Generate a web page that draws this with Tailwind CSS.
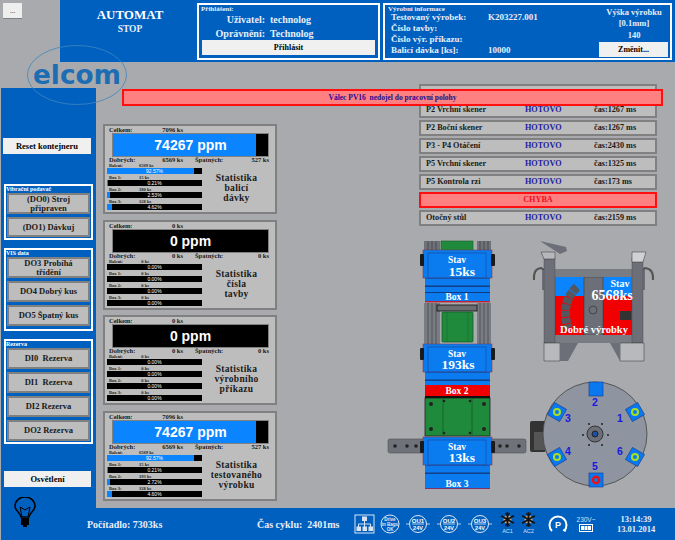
<!DOCTYPE html>
<html lang="cs">
<head>
<meta charset="UTF-8">
<title>Elcom - Automat</title>
<script src="https://cdn.jsdelivr.net/npm/@tailwindcss/browser@4"></script>
</head>
<body class="bg-[#a9aaae]">
<div class="relative w-[675px] h-[540px] overflow-hidden bg-[#a9aaae] font-['Liberation_Serif',serif] font-bold text-[#1a1a1a]">

  <!-- top -->
  <div class="flex h-[62px]">
    <div class="w-[60px] pl-[3px] pt-[3px]">
      <button class="block w-[19px] h-[16px] bg-[#eeeeee] border-b border-[#808080] text-[7px] leading-[16px] text-[#555]">...</button>
    </div>
    <div class="flex-1 flex bg-[#0060c0] pt-[3px] text-white">
      <div class="w-[137px] pl-[3px] text-center">
        <div class="text-[13px] leading-[15px] mt-[4px]">AUTOMAT</div>
        <div class="text-[9.5px] leading-[13px] mt-[1px] text-[#e8eef8]">STOP</div>
      </div>
      <div class="w-[183px] h-[57px] border-2 border-white px-[3px] text-[#e8eef8]">
        <div class="text-[7px] leading-[6px] mt-px -ml-px">Přihlášení:</div>
        <div class="flex h-[14px] items-center text-[10px]"><span class="w-[63px] text-right">Uživatel:</span><span class="ml-[5px]">technolog</span></div>
        <div class="flex h-[14px] items-center text-[10px]"><span class="w-[63px] text-right">Oprávnění:</span><span class="ml-[5px]">Technolog</span></div>
        <button class="block w-full h-[15px] bg-[#f0f0f0] text-black text-[8px] leading-[15px]">Přihlásit</button>
      </div>
      <div class="w-[289px] h-[57px] ml-[3px] border-2 border-white flex text-[#e8eef8]">
        <div class="w-[210px] pl-[3px]">
          <div class="text-[7px] leading-[6px] mt-px">Výrobní informace</div>
          <div class="flex h-[11px] items-center text-[9px] pl-[3px] mt-[0.5px]"><span class="w-[97px]">Testovaný výrobek:</span><span>K203227.001</span></div>
          <div class="flex h-[11px] items-center text-[9px] pl-[3px]"><span class="w-[97px]">Číslo tavby:</span></div>
          <div class="flex h-[11px] items-center text-[9px] pl-[3px]"><span class="w-[97px]">Číslo výr. příkazu:</span></div>
          <div class="flex h-[11px] items-center text-[9px] pl-[3px]"><span class="w-[97px]">Balicí dávka [ks]:</span><span>10000</span></div>
        </div>
        <div class="flex-1 pl-[3px] text-center text-[8.5px] leading-[11px]">
          <div class="mt-[1.5px]">Výška výrobku</div>
          <div>[0.1mm]</div>
          <div class="h-[13px] leading-[12px]">140</div>
          <button class="block ml-px w-[69px] h-[15px] bg-[#f0f0f0] text-black text-[8px] leading-[15px]">Změnit...</button>
        </div>
      </div>
      <div class="flex-1"></div>
    </div>
  </div>

  <!-- middle -->
  <div class="flex h-[446px]">
    <div class="w-[96px] mt-[26px] bg-[#0060c0] border-l border-[#a9aaae] pl-[2px] pr-[5px]">
      <button class="block mt-[50px] w-[88px] h-[16px] bg-[#f0f0f0] text-[8.5px] leading-[16px] text-black">Reset kontejneru</button>
      <div class="mt-[30px] h-[56px] ml-px w-[89px] border-2 border-white px-px">
        <div class="text-[6px] leading-[7px] text-white -ml-px">Vibrační podavač</div>
        <div class="flex flex-col gap-[3px]">
          <button class="h-[21px] bg-[#bdbdbd] border-2 border-[#808080] text-[8.5px] leading-[9px]">(DO0) Stroj<br>připraven</button>
          <button class="h-[20px] bg-[#bdbdbd] border-2 border-[#808080] text-[8.5px] leading-[9px]">(DO1) Dávkuj</button>
        </div>
      </div>
      <div class="mt-[8px] h-[83px] ml-px w-[89px] border-2 border-white px-px">
        <div class="text-[6px] leading-[7px] text-white -ml-px">VIS data</div>
        <div class="flex flex-col gap-[3px]">
          <button class="h-[21px] bg-[#bdbdbd] border-2 border-[#808080] text-[8.5px] leading-[9px]">DO3 Probíhá<br>třídění</button>
          <button class="h-[21px] bg-[#bdbdbd] border-2 border-[#808080] text-[8.5px] leading-[9px]">DO4 Dobrý kus</button>
          <button class="h-[21px] bg-[#bdbdbd] border-2 border-[#808080] text-[8.5px] leading-[9px]">DO5 Špatný kus</button>
        </div>
      </div>
      <div class="mt-[8px] h-[105px] ml-px w-[89px] border-2 border-white px-px">
        <div class="text-[6px] leading-[7px] text-white -ml-px">Rezerva</div>
        <div class="flex flex-col gap-[3px]">
          <button class="h-[21px] bg-[#bdbdbd] border-2 border-[#808080] text-[8.5px] leading-[9px]">DI0&nbsp; Rezerva</button>
          <button class="h-[21px] bg-[#bdbdbd] border-2 border-[#808080] text-[8.5px] leading-[9px]">DI1&nbsp; Rezerva</button>
          <button class="h-[21px] bg-[#bdbdbd] border-2 border-[#808080] text-[8.5px] leading-[9px]">DI2 Rezerva</button>
          <button class="h-[21px] bg-[#bdbdbd] border-2 border-[#808080] text-[8.5px] leading-[9px]">DO2 Rezerva</button>
        </div>
      </div>
      <button class="block mt-[27px] ml-px w-[87px] h-[16px] bg-[#f0f0f0] text-[8.5px] leading-[16px] text-black">Osvětlení</button>
    </div>

    <!-- statistics cards -->
    <div id="cards" class="w-[174px] ml-[7px] pt-[62px] flex flex-col gap-[5.5px]"></div>

    <!-- step table -->
    <div class="w-[295px] ml-[103px]">
      <div class="ml-[39px] mt-[22px] w-[238px] flex flex-col gap-[2px] text-[8.2px]">
        <div class="h-[16px] bg-[#bdbdbd] border-2 border-[#808080]"></div>
        <div class="h-[16px] bg-[#bdbdbd] border-2 border-[#808080] grid grid-cols-[99px_69px_1fr] items-center pl-[5px]"><span>P2 Vrchní skener</span><span class="text-[#1c1c9c]">HOTOVO</span><span>čas:1267 ms</span></div>
        <div class="h-[16px] bg-[#bdbdbd] border-2 border-[#808080] grid grid-cols-[99px_69px_1fr] items-center pl-[5px]"><span>P2 Boční skener</span><span class="text-[#1c1c9c]">HOTOVO</span><span>čas:1267 ms</span></div>
        <div class="h-[16px] bg-[#bdbdbd] border-2 border-[#808080] grid grid-cols-[99px_69px_1fr] items-center pl-[5px]"><span>P3 - P4 Otáčení</span><span class="text-[#1c1c9c]">HOTOVO</span><span>čas:2430 ms</span></div>
        <div class="h-[16px] bg-[#bdbdbd] border-2 border-[#808080] grid grid-cols-[99px_69px_1fr] items-center pl-[5px]"><span>P5 Vrchní skener</span><span class="text-[#1c1c9c]">HOTOVO</span><span>čas:1325 ms</span></div>
        <div class="h-[16px] bg-[#bdbdbd] border-2 border-[#808080] grid grid-cols-[99px_69px_1fr] items-center pl-[5px]"><span>P5 Kontrola rzi</span><span class="text-[#1c1c9c]">HOTOVO</span><span>čas:173 ms</span></div>
        <div class="h-[16px] bg-[#ff8080] border-2 border-[#ff1010] text-center leading-[12px] text-[#f01020]">CHYBA</div>
        <div class="h-[16px] bg-[#bdbdbd] border-2 border-[#808080] grid grid-cols-[99px_69px_1fr] items-center pl-[5px]"><span>Otočný stůl</span><span class="text-[#1c1c9c]">HOTOVO</span><span>čas:2159 ms</span></div>
      </div>
    </div>
  </div>

  <!-- logo over the corner -->
  <svg class="absolute left-[20px] top-[40px] overflow-visible" width="115" height="70" viewBox="0 0 115 70">
    <ellipse cx="57" cy="35" rx="49.5" ry="29.5" fill="none" stroke="#3f86bd" stroke-width="0.8"/>
    <text x="13" y="44" font-family="'DejaVu Sans',sans-serif" font-weight="700" font-size="26" textLength="88" lengthAdjust="spacingAndGlyphs" fill="#1c6db3">elcom</text>
  </svg>

  <!-- alert over the step table -->
  <div class="absolute z-10 left-[122px] top-[89px] w-[541px] h-[17px] bg-[#ff8080] border-2 border-[#ff1010] text-center text-[7.5px] leading-[13px] text-[#2a0a90]">Válec PV16&nbsp; nedojel do pracovní polohy</div>

  <!-- machine drawings, free canvas -->
  <svg class="absolute left-[380px] top-[235px]" width="150" height="260" viewBox="0 0 150 260" font-family="'Liberation Serif',serif" font-weight="700" text-anchor="middle">
    <defs>
      <g id="box">
        <rect x="45" y="0" width="65" height="52" fill="#0a7cf0"/>
        <rect x="43" y="0" width="69" height="28" fill="#0a7cf0" stroke="#7a3050" stroke-width="0.5"/>
        <rect x="48" y="3" width="58" height="25" fill="none" stroke="#1850a8" stroke-width="0.8"/>
        <rect x="45" y="28" width="65" height="0.8" fill="#1850a8"/>
        <rect x="45" y="35.5" width="65" height="1.4" fill="#123a80"/>
        <rect x="45" y="42" width="65" height="1.2" fill="#123a80"/>
        <rect x="40" y="4" width="4" height="12" rx="1" fill="#1a1a1a"/>
        <rect x="111" y="4" width="4" height="12" rx="1" fill="#1a1a1a"/>
        <text x="77" y="13" font-size="9.5" fill="#fff">Stav</text>
      </g>
    </defs>
    <!-- rails -->
    <rect x="44" y="6" width="16" height="10" fill="#6f7278"/>
    <rect x="97" y="6" width="14" height="10" fill="#6f7278"/>
    <path d="M48 6v10M52 6v10M56 6v10M100 6v10M104 6v10M108 6v10" stroke="#3a3c40" stroke-width="0.7"/>
    <rect x="61" y="6" width="32" height="10" fill="#1f8a3c" stroke="#146028" stroke-width="0.6"/>
    <rect x="44" y="68" width="16" height="41" fill="#797c82"/>
    <rect x="97" y="68" width="14" height="41" fill="#797c82"/>
    <path d="M48 68v41M52 68v41M56 68v41M100 68v41M104 68v41M108 68v41" stroke="#44474c" stroke-width="0.7"/>
    <rect x="57" y="70" width="40" height="6" fill="#6a6c70" stroke="#111" stroke-width="0.8"/>
    <rect x="62" y="77" width="31" height="30" rx="1" fill="#1f8a3c" stroke="#146028" stroke-width="0.8"/>
    <path d="M67 77v30M88 77v30" stroke="#146028" stroke-width="0.5"/>
    <!-- arms -->
    <rect x="8" y="204" width="36" height="14" rx="2" fill="#6f7278" stroke="#505258" stroke-width="0.6"/>
    <rect x="111" y="204" width="35" height="14" rx="2" fill="#6f7278" stroke="#505258" stroke-width="0.6"/>
    <g fill="#222"><circle cx="15" cy="211" r="1.8"/><circle cx="27" cy="211" r="1.8"/><circle cx="36" cy="211" r="1.8"/><circle cx="120" cy="211" r="1.8"/><circle cx="127" cy="211" r="1.8"/><circle cx="139" cy="211" r="1.8"/></g>
    <!-- green plate -->
    <rect x="45" y="163" width="65" height="38" fill="#1f8a3c" stroke="#222" stroke-width="0.8"/>
    <path d="M63 163v38M92 163v38" stroke="#146028" stroke-width="0.9"/>
    <g fill="#222"><circle cx="51" cy="169" r="2"/><circle cx="51" cy="194" r="2"/><circle cx="104" cy="169" r="2"/><circle cx="104" cy="194" r="2"/><circle cx="64" cy="166" r="1.3"/><circle cx="90" cy="166" r="1.3"/><circle cx="64" cy="198" r="1.3"/><circle cx="90" cy="198" r="1.3"/></g>
    <!-- box 1 -->
    <use href="#box" y="15"/>
    <rect x="45" y="58" width="65" height="9" fill="#0a7cf0"/>
    <rect x="45" y="66" width="65" height="1.4" fill="#c02030"/>
    <text x="82" y="41" font-size="13.5" fill="#fff">15ks</text>
    <text x="77" y="65" font-size="9.5" fill="#fff">Box 1</text>
    <!-- box 2 -->
    <use href="#box" y="109"/>
    <rect x="45" y="150" width="65" height="11" fill="#f00000"/>
    <rect x="45" y="161" width="65" height="2" fill="#111"/>
    <text x="78" y="134" font-size="13.5" fill="#fff">193ks</text>
    <text x="77" y="159" font-size="9.5" fill="#fff">Box 2</text>
    <!-- box 3 -->
    <use href="#box" y="202"/>
    <rect x="45" y="244" width="65" height="9" fill="#0a7cf0"/>
    <rect x="45" y="253" width="65" height="0.8" fill="#a02040"/>
    <text x="82" y="227" font-size="13.5" fill="#fff">13ks</text>
    <text x="77" y="252" font-size="9.5" fill="#fff">Box 3</text>
  </svg>

  <svg class="absolute left-[530px] top-[235px]" width="145" height="135" viewBox="10 0 145 135" font-family="'Liberation Serif',serif" font-weight="700" text-anchor="middle">
    <path d="M20 6L46 12L47 16L40 19Z" fill="#6d6f78"/>
    <path d="M14 45Q13 34 21 33Q24 34 25 37M133 45Q134 34 125 33Q123 34 122 37" fill="none" stroke="#555" stroke-width="2"/>
    <rect x="22" y="35" width="3" height="20" fill="#6d6f78"/>
    <rect x="122" y="35" width="3" height="20" fill="#6d6f78"/>
    <rect x="35" y="42" width="77" height="19" fill="#0a84ff"/>
    <rect x="35" y="61" width="77" height="39" fill="#f00000"/>
    <rect x="64" y="42" width="19" height="58" fill="#6d6f78" stroke="#333" stroke-width="0.5"/>
    <circle cx="73" cy="75" r="4" fill="none" stroke="#333" stroke-width="0.7"/>
    <path d="M57 52Q40 68 48 93" fill="none" stroke="#55575e" stroke-width="9" stroke-dasharray="6 0.8"/>
    <rect x="100" y="76" width="11" height="9" fill="#333"/>
    <rect x="35" y="34" width="77" height="8" fill="#7a7c84"/>
    <rect x="35" y="100" width="77" height="8" fill="#7a7c84"/>
    <rect x="24" y="23" width="11" height="85" fill="#6d6f78" stroke="#444" stroke-width="0.4"/>
    <rect x="112" y="23" width="11" height="85" fill="#6d6f78" stroke="#444" stroke-width="0.4"/>
    <path d="M21 17H35V24H24Z" fill="#b5b7bb" stroke="#333" stroke-width="0.5"/>
    <path d="M112 17H126L123 27H112Z" fill="#d0d1d4" stroke="#333" stroke-width="0.5"/>
    <path d="M24 108H40V126H24Z" fill="#b8b9bc" stroke="#333" stroke-width="0.5"/>
    <path d="M100 108H124V126H100Z" fill="#b8b9bc" stroke="#333" stroke-width="0.5"/>
    <path d="M40 108H58L48 126H40Z" fill="#6d6f78"/>
    <path d="M90 108H100V126Z" fill="#6d6f78"/>
    <text x="100" y="52" font-size="10" fill="#fff">Stav</text>
    <text x="92" y="65" font-size="14" fill="#fff">6568ks</text>
    <text x="74" y="98" font-size="10.5" fill="#fff">Dobré výrobky</text>
  </svg>

  <svg class="absolute left-[530px] top-[370px]" width="145" height="125" viewBox="10 0 145 125" font-family="'Liberation Sans',sans-serif" text-anchor="middle">
    <rect x="10" y="51" width="16" height="31" rx="2" fill="#333"/>
    <rect x="14" y="62" width="12" height="18" fill="#555"/>
    <circle cx="75" cy="64" r="52" fill="#8e94a0" stroke="#444" stroke-width="0.8"/>
    <g fill="#0a78f0" stroke="#123a90" stroke-width="0.6">
      <rect x="69" y="12" width="14" height="14"/>
      <rect x="69" y="103" width="14" height="14"/>
      <rect x="108" y="35" width="14" height="14" transform="rotate(-30 115 42)"/>
      <rect x="30" y="35" width="14" height="14" transform="rotate(30 37 42)"/>
      <rect x="30" y="80" width="14" height="14" transform="rotate(-30 37 87)"/>
      <rect x="108" y="80" width="14" height="14" transform="rotate(30 115 87)"/>
    </g>
    <g fill="none" stroke="#a8e020" stroke-width="2"><circle cx="115" cy="42" r="3"/><circle cx="37" cy="42" r="3"/><circle cx="37" cy="87" r="3"/><circle cx="115" cy="87" r="3"/></g>
    <circle cx="76" cy="110" r="3.2" fill="none" stroke="#f01010" stroke-width="2.4"/>
    <circle cx="75" cy="64" r="8" fill="#6d6f78" stroke="#333"/>
    <circle cx="75" cy="64" r="3" fill="#1850a8" stroke="#222"/>
    <g fill="#222"><circle cx="69" cy="54" r="1"/><circle cx="82" cy="54" r="1"/><circle cx="63" cy="65" r="1"/><circle cx="88" cy="65" r="1"/><circle cx="69" cy="75" r="1"/><circle cx="82" cy="75" r="1"/></g>
    <g fill="#1818e0" font-size="10.5"><text x="75" y="36">2</text><text x="100" y="52">1</text><text x="48" y="52">3</text><text x="48" y="85">4</text><text x="100" y="85">6</text><text x="75" y="100">5</text></g>
  </svg>

  <!-- bottom bar -->
  <div class="absolute left-0 top-[508px] w-[675px] h-[32px] bg-[#0060c0] border-l border-[#a9aaae] flex items-center text-white">
    <svg class="ml-[13px] -mt-[23px]" width="22" height="32" viewBox="0 0 22 32" fill="none" stroke="#000" stroke-width="1.5">
      <path d="M7 20C6 15 1 14 1 9A10 9 0 0 1 21 9C21 14 16 15 15 20Z"/>
      <path d="M8 20L6 10M14 20L16 10M6 10L11 13L16 10" stroke-width="1"/>
      <rect x="7" y="21" width="8" height="7" fill="#000" stroke="none"/>
      <rect x="9" y="28" width="4" height="2" fill="#000" stroke="none"/>
    </svg>
    <span class="ml-[51px] w-[170px] text-[10px] text-[#e8eef8]">Počítadlo: 7303ks</span>
    <span class="w-[85px] text-[10px] whitespace-nowrap text-[#e8eef8]">Čas cyklu:&nbsp; 2401ms</span>
    <div class="ml-[12px] flex items-center text-white">
      <svg width="21" height="20" viewBox="0 0 21 20" fill="none" stroke="#d8e4f4" stroke-width="1"><rect x="1" y="1" width="19" height="18"/><rect x="8.5" y="3" width="4" height="3.5" fill="#d8e4f4"/><path d="M10.5 6.500V10M4.500 13V10H16.500V13M10.500 10V13"/><rect x="3" y="13" width="3.500" height="3.500" fill="#d8e4f4"/><rect x="9" y="13" width="3.500" height="3.500" fill="#d8e4f4"/><rect x="15" y="13" width="3.500" height="3.500" fill="#d8e4f4"/></svg>
      <svg class="ml-[5px]" width="20" height="20" viewBox="0 0 20 20" fill="none" font-family="'Liberation Sans',sans-serif" text-anchor="middle"><circle cx="10" cy="10" r="9" stroke="#e0e8f4" stroke-width="1"/><g fill="#e0e8f4" stroke="none" font-size="4.5"><text x="10" y="6.5">Drive</text><text x="10" y="11.5">in Bags</text><text x="10" y="16.5">OK</text></g></svg>
      <svg class="ml-[6px]" width="24" height="20" viewBox="0 0 24 20" fill="none" font-family="'Liberation Sans',sans-serif" font-weight="700" text-anchor="middle"><circle cx="12" cy="10" r="8.5" stroke="#e0e8f4"/><path d="M0 10H3.500M20.500 10H24M6 10H18" stroke="#e0e8f4" stroke-width="0.8"/><text x="12" y="8.5" fill="#fff" font-size="6">OU1</text><text x="12" y="16" fill="#fff" font-size="5.5">24V</text></svg>
      <svg class="ml-[7px]" width="24" height="20" viewBox="0 0 24 20" fill="none" font-family="'Liberation Sans',sans-serif" font-weight="700" text-anchor="middle"><circle cx="12" cy="10" r="8.5" stroke="#e0e8f4"/><path d="M0 10H3.500M20.500 10H24M6 10H18" stroke="#e0e8f4" stroke-width="0.8"/><text x="12" y="8.5" fill="#fff" font-size="6">OU2</text><text x="12" y="16" fill="#fff" font-size="5.5">24V</text></svg>
      <svg class="ml-[7px]" width="24" height="20" viewBox="0 0 24 20" fill="none" font-family="'Liberation Sans',sans-serif" font-weight="700" text-anchor="middle"><circle cx="12" cy="10" r="8.5" stroke="#e0e8f4"/><path d="M0 10H3.500M20.500 10H24M6 10H18" stroke="#e0e8f4" stroke-width="0.8"/><text x="12" y="8.5" fill="#fff" font-size="6">OU3</text><text x="12" y="16" fill="#fff" font-size="5.5">24V</text></svg>
      <div class="ml-[7px] w-[17px] flex flex-col items-center -mt-[2px] font-['Liberation_Sans',sans-serif] font-normal text-[5.5px] leading-[7px] text-[#cfe0f4]">
        <svg width="17" height="17" viewBox="0 0 15 15" stroke="#111" stroke-width="1.6" fill="none"><circle cx="7.5" cy="7.5" r="3.5" fill="#c8a880" stroke="none"/><path d="M7.500 1V14M1.900 4.250L13.100 10.750M1.900 10.750L13.100 4.250"/><path d="M5.500 2L7.500 4L9.500 2M5.500 13L7.500 11L9.500 13" stroke-width="1"/></svg>
        AC1
      </div>
      <div class="ml-[4px] w-[17px] flex flex-col items-center -mt-[2px] font-['Liberation_Sans',sans-serif] font-normal text-[5.5px] leading-[7px] text-[#cfe0f4]">
        <svg width="17" height="17" viewBox="0 0 15 15" stroke="#111" stroke-width="1.6" fill="none"><circle cx="7.5" cy="7.5" r="3.5" fill="#c8a880" stroke="none"/><path d="M7.500 1V14M1.900 4.250L13.100 10.750M1.900 10.750L13.100 4.250"/><path d="M5.500 2L7.500 4L9.500 2M5.500 13L7.500 11L9.500 13" stroke-width="1"/></svg>
        AC2
      </div>
      <svg class="ml-[11px]" width="20" height="18" viewBox="0 0 20 18" fill="none" font-family="'Liberation Sans',sans-serif" font-weight="700" text-anchor="middle"><path d="M4 16A8.500 8.500 0 1 1 16 16" stroke="#fff" stroke-width="2"/><path d="M15 15L18 16" stroke="#fff" stroke-width="1.5"/><text x="10" y="13" fill="#fff" font-size="9">P</text></svg>
      <div class="ml-[9px] w-[18px] flex flex-col items-center font-['Liberation_Sans',sans-serif] font-normal text-[6.5px] leading-[8px] text-[#cfe0f4]">
        230V~
        <svg width="14" height="8" viewBox="0 0 14 8" fill="#fff"><rect x="0.5" y="0.5" width="13" height="7" fill="none" stroke="#fff"/><rect x="2" y="2" width="3" height="4"/><rect x="5.5" y="2" width="3" height="4"/><rect x="9" y="2" width="3" height="4"/></svg>
      </div>
      <div class="ml-[18px] w-[46px] text-center text-[8.5px] leading-[10px] text-[#e8eef8]">13:14:39<br>13.01.2014</div>
    </div>
  </div>
</div>

<script>
  const cards = [
    { total: '7096 ks', ppm: '74267 ppm', fill: 92, good: '6569 ks', bad: '527 ks', title: ['Statistika', 'balicí', 'dávky'],
      bars: [['Balení:', '6569 ks', 92, '92.57%'], ['Box 1:', '15 ks', 1, '0.21%'], ['Box 2:', '180 ks', 3, '2.53%'], ['Box 3:', '328 ks', 5, '4.62%']] },
    { total: '0 ks', ppm: '0 ppm', fill: 0, good: '0 ks', bad: '0 ks', title: ['Statistika', 'čísla', 'tavby'],
      bars: [['Balení:', '0 ks', 0, '0.00%'], ['Box 1:', '0 ks', 0, '0.00%'], ['Box 2:', '0 ks', 0, '0.00%'], ['Box 3:', '0 ks', 0, '0.00%']] },
    { total: '0 ks', ppm: '0 ppm', fill: 0, good: '0 ks', bad: '0 ks', title: ['Statistika', 'výrobního', 'příkazu'],
      bars: [['Balení:', '0 ks', 0, '0.00%'], ['Box 1:', '0 ks', 0, '0.00%'], ['Box 2:', '0 ks', 0, '0.00%'], ['Box 3:', '0 ks', 0, '0.00%']] },
    { total: '7096 ks', ppm: '74267 ppm', fill: 92, good: '6569 ks', bad: '527 ks', title: ['Statistika', 'testovaného', 'výrobku'],
      bars: [['Balení:', '6569 ks', 92, '92.57%'], ['Box 1:', '15 ks', 1, '0.21%'], ['Box 2:', '193 ks', 3, '2.72%'], ['Box 3:', '328 ks', 5, '4.60%']] }
  ];

  document.getElementById('cards').innerHTML = cards.map(c => `
    <div class="w-[174px] h-[90px] bg-[#bdbdbd] border-2 border-[#808080] px-[2px] pt-px">
      <div class="flex h-[6px] text-[6.5px] leading-[6px] pl-[2px]">
        <span class="w-[40px]">Celkem:</span><span class="w-[34px] text-right">${c.total}</span>
      </div>
      <div class="relative ml-[5px] mr-[4px] h-[24px] bg-black border border-[#808080] overflow-hidden">
        <div class="h-full bg-[#0a84ff]" style="width:${c.fill}%"></div>
        <div class="absolute inset-0 text-center text-white text-[14px] leading-[22px] font-['Liberation_Sans',sans-serif]">${c.ppm}</div>
      </div>
      <div class="flex h-[5px] text-[6.5px] leading-[5px] pl-[2px] pr-[4px]">
        <span class="w-[40px]">Dobrých:</span><span class="w-[34px] text-right">${c.good}</span>
        <span class="ml-[12px]">Špatných:</span><span class="flex-1 text-right">${c.bad}</span>
      </div>
      <div class="flex">
        <div class="w-[95px]">
          ${c.bars.map(b => `
            <div class="flex h-[6px] text-[4.5px] leading-[7px] pl-[2px]"><span class="w-[30px]">${b[0]}</span><span class="w-[10px] text-right whitespace-nowrap">${b[1]}</span></div>
            <div class="relative h-[6px] bg-black overflow-hidden">
              <div class="h-full bg-[#0a84ff]" style="width:${b[2]}%"></div>
              <div class="absolute inset-0 text-center text-white text-[5px] leading-[6px] font-normal font-['Liberation_Sans',sans-serif]">${b[3]}</div>
            </div>`).join('')}
        </div>
        <div class="w-[69px] pt-[11px] text-center text-[9.5px] leading-[10px] tracking-[0.3px]">
          ${c.title.map(t => `<div>${t}</div>`).join('')}
        </div>
      </div>
    </div>`).join('');
</script>
</body>
</html>
